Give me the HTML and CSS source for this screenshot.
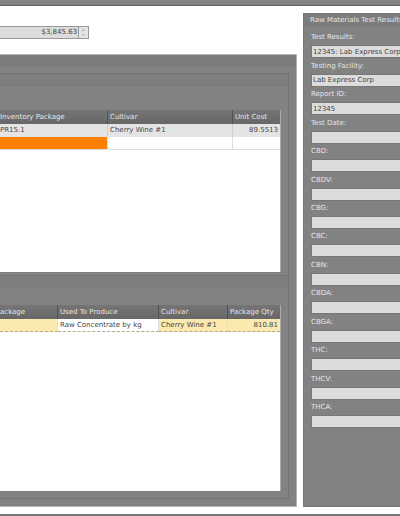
FILE: index.html
```
<!DOCTYPE html>
<html lang="en">
<head>
<meta charset="utf-8">
<title>Raw Materials</title>
<link rel="stylesheet" href="styles.css">
</head>
<body>
<div class="topbar"></div>
<main class="workspace">
  <div class="left">
    <div class="amount">
      <input class="amount-value" type="text" value="$3,845.63" aria-label="Total cost">
      <div class="spinner">
        <button type="button" aria-label="Increase"><svg viewBox="0 0 4 2"><path d="M0 2L2 0L4 2Z"/></svg></button>
        <button type="button" aria-label="Decrease"><svg viewBox="0 0 4 2"><path d="M0 0L2 2L4 0Z"/></svg></button>
      </div>
    </div>
    <section class="panel">
      <div class="panel-head"></div>
      <div class="group group-inputs">
        <div class="group-head"></div>
        <div class="grid-box">
          <table>
            <colgroup><col><col class="w-cultivar"><col class="w-cost"></colgroup>
            <thead><tr><th>Inventory Package</th><th>Cultivar</th><th>Unit Cost</th></tr></thead>
            <tbody>
              <tr class="shaded"><td>PR15.1</td><td>Cherry Wine #1</td><td class="num">89.5513</td></tr>
              <tr class="blank"><td class="active"></td><td></td><td></td></tr>
            </tbody>
          </table>
        </div>
      </div>
      <div class="group group-outputs">
        <div class="group-head"></div>
        <div class="grid-box">
          <table>
            <colgroup><col><col class="w-produce"><col class="w-strain"><col class="w-qty"></colgroup>
            <thead><tr><th>ackage</th><th>Used To Produce</th><th>Cultivar</th><th>Package Qty</th></tr></thead>
            <tbody>
              <tr class="selected"><td></td><td class="plain">Raw Concentrate by kg</td><td>Cherry Wine #1</td><td class="num">810.81</td></tr>
            </tbody>
          </table>
        </div>
      </div>
    </section>
  </div>
  <aside class="results">
    <h2>Raw Materials Test Results</h2>
    <form class="fields">
      <label>Test Results:<input type="text" value="12345: Lab Express Corp"></label>
      <label>Testing Facility:<input type="text" value="Lab Express Corp"></label>
      <label>Report ID:<input type="text" value="12345"></label>
      <label>Test Date:<input type="text"></label>
      <label>CBD:<input type="text"></label>
      <label>CBDV:<input type="text"></label>
      <label>CBG:<input type="text"></label>
      <label>CBC:<input type="text"></label>
      <label>CBN:<input type="text"></label>
      <label>CBDA:<input type="text"></label>
      <label>CBGA:<input type="text"></label>
      <label>THC:<input type="text"></label>
      <label>THCV:<input type="text"></label>
      <label>THCA:<input type="text"></label>
    </form>
  </aside>
</main>
<div class="bottombar"></div>
</body>
</html>
```
FILE: styles.css
```
* { box-sizing: border-box; }
body {
  margin: 0;
  min-height: 100vh;
  display: flex;
  flex-direction: column;
  overflow-x: hidden;
  background: #fff;
  color: #444;
  font: 7px/9px "DejaVu Sans", sans-serif;
}
input, button { font: inherit; color: inherit; margin: 0; border-radius: 0; }
.topbar { height: 6px; background: #828282; border-bottom: 1px solid #625e62; }
.bottombar { height: 2px; background: #777; }
.workspace {
  flex: 1;
  display: grid;
  grid-template-columns: minmax(0, 49fr) minmax(0, 16fr);
  column-gap: 6px;
  padding: 7px 0;
}
.left { display: flex; flex-direction: column; padding-top: 13px; min-width: 0; }
.amount {
  display: flex;
  width: 30%;
  height: 13px;
  margin-bottom: 15px;
  background: #dcdcdc;
  border: 1px solid #999;
  border-left: 0;
}
.amount-value {
  flex: 1;
  min-width: 0;
  padding: 0 1px 0 0;
  border: 0;
  border-right: 1px solid #999;
  background: none;
  text-align: right;
}
.spinner { width: 9px; display: flex; flex-direction: column; }
.spinner button {
  flex: 1;
  display: flex;
  align-items: center;
  justify-content: center;
  padding: 0;
  border: 0;
  background: #e4e4e4;
}
.spinner svg { width: 3px; height: 2px; fill: #999; }
.panel {
  flex: 1;
  display: flex;
  flex-direction: column;
  padding: 0 7px 7px 0;
  background: #828282;
  border: 1px solid #b4b4b4;
  border-left: 0;
}
.panel-head { height: 12px; margin: 0 -7px 6px 0; background: #7c7c7c; }
.group {
  display: flex;
  flex-direction: column;
  padding-right: 7px;
  border: 1px solid #747474;
  border-left: 0;
}
.group-head { height: 12px; margin-right: -7px; background: #7e7e7e; border-bottom: 1px solid #7b7b7b; }
.group-inputs { flex: 205; border-bottom: 0; padding-bottom: 3px; }
.group-outputs { flex: 222; padding-bottom: 7px; }
.grid-box { flex: 1; background: #fff; border-right: 1px solid #aaa; }
.group-inputs .grid-box { margin-top: 24px; }
.group-outputs .grid-box { margin-top: 17px; }
table { width: 100%; table-layout: fixed; border-collapse: separate; border-spacing: 0; }
.w-cultivar { width: 125px; }
.w-cost { width: 47px; }
.w-produce { width: 101px; }
.w-strain { width: 69px; }
.w-qty { width: 52px; }
th, td { padding: 0 2px; text-align: left; white-space: nowrap; overflow: hidden; }
th {
  height: 14px;
  font-weight: normal;
  color: #e6e6e6;
  background: linear-gradient(#757575, #676767);
  border-right: 1px solid #505050;
}
th:first-child, td:first-child { padding-left: 0; }
th:last-child, td:last-child { border-right: 0; }
td { height: 13px; border-right: 1px solid #ddd; border-bottom: 1px solid #ddd; }
.num { text-align: right; padding-right: 2px; }
.shaded td { background: #e4e4e4; border-color: #e4e4e4 #d0d0d0 #e4e4e4 #e4e4e4; }
td.active { background: #ff8000; }
.selected td { background: #fbeab0; border-bottom: 1px dashed #b0a98c; }
.selected td.plain { background: #fff; }
.results { background: #828282; border: 1px solid #777; border-right: 0; min-width: 0; overflow: hidden; }
.results h2 {
  margin: 0;
  height: 12px;
  padding-left: 6px;
  font: inherit;
  line-height: 12px;
  white-space: nowrap;
  color: #e6e6e6;
  background: #7c7c7c;
  border-bottom: 1px solid #777;
}
.fields { height: 402px; padding: 4px 0 0 7px; display: grid; grid-auto-rows: 1fr; color: #e6e6e6; }
.fields label { display: flex; flex-direction: column; justify-content: flex-end; gap: 3px; white-space: nowrap; }
.fields input {
  width: 100%;
  height: 13px;
  padding: 0 0 0 1px;
  border: 1px solid #777;
  border-right: 0;
  background: #dcdcdc;
  color: #444;
}
```
